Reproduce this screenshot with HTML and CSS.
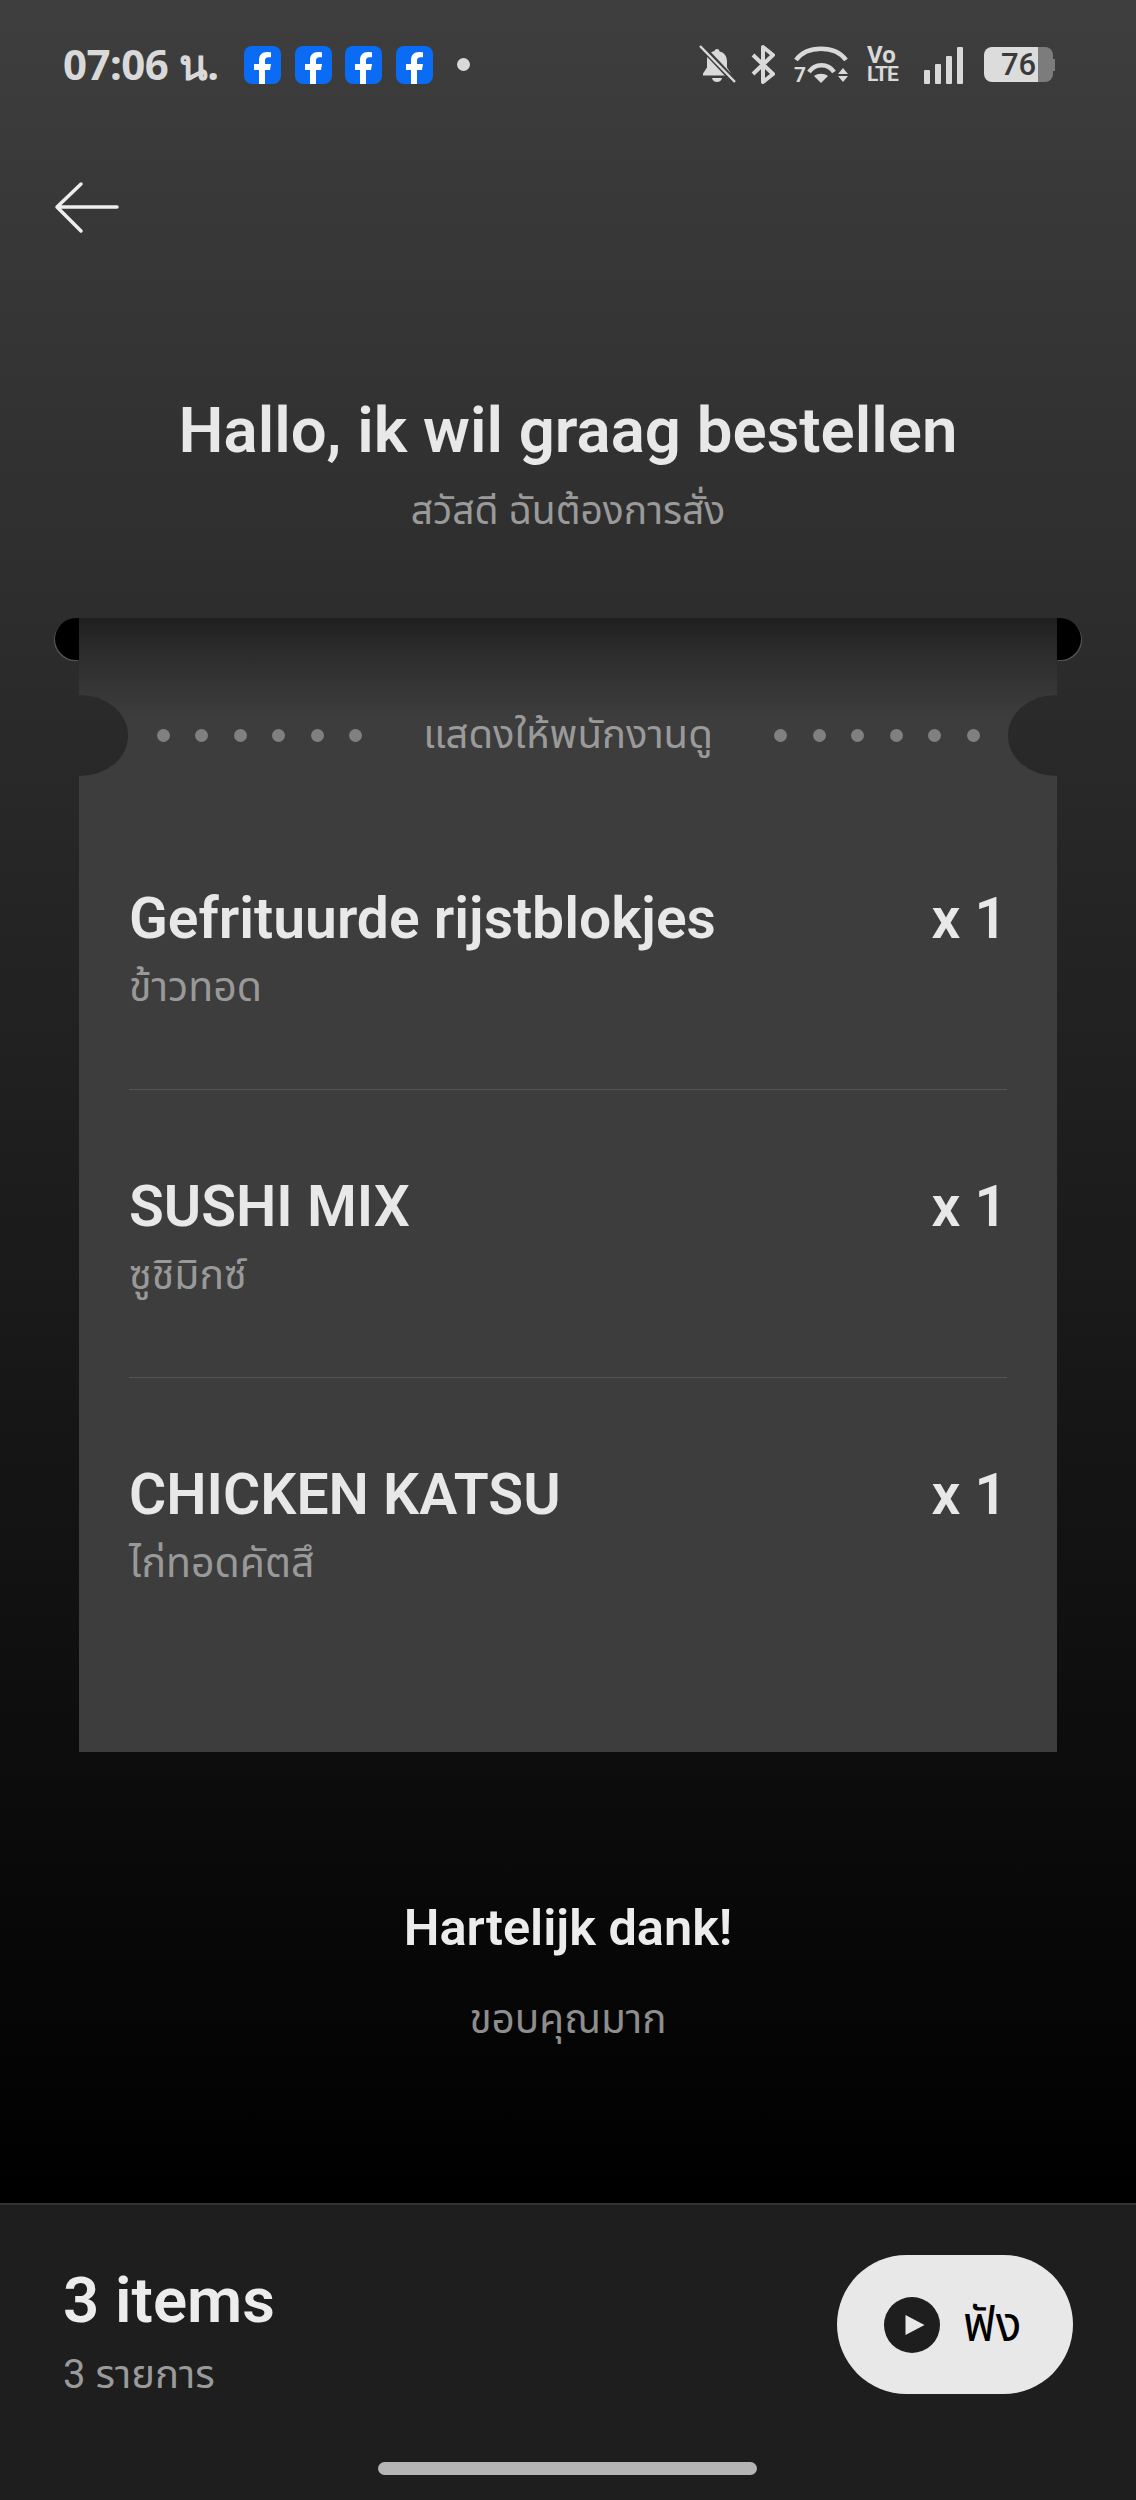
FILE: index.html
```html
<!DOCTYPE html>
<html lang="nl">
<head>
    <meta charset="UTF-8">
    <meta name="viewport" content="width=device-width, initial-scale=1.0">
    <title>Bestellen</title>
    <link rel="stylesheet" href="styles.css">
</head>
<body>
    <div class="screen">
        <div class="status-bar">
            <div class="status-left">
                <span class="clock">07:06 น.</span>
                <svg class="fb" viewBox="0 0 37 38"><rect width="37" height="38" rx="8" fill="#0a6cf5"/><path d="M15 38V24h-5v-6h5v-4c0-5 3-8 8-8 2 0 4 .3 4 .3v5h-2.500c-2.500 0-3.500 1.500-3.500 3.500V18h6l-1 6h-5v14z" fill="#fff"/></svg>
                <svg class="fb" viewBox="0 0 37 38"><rect width="37" height="38" rx="8" fill="#0a6cf5"/><path d="M15 38V24h-5v-6h5v-4c0-5 3-8 8-8 2 0 4 .3 4 .3v5h-2.500c-2.500 0-3.500 1.500-3.500 3.500V18h6l-1 6h-5v14z" fill="#fff"/></svg>
                <svg class="fb" viewBox="0 0 37 38"><rect width="37" height="38" rx="8" fill="#0a6cf5"/><path d="M15 38V24h-5v-6h5v-4c0-5 3-8 8-8 2 0 4 .3 4 .3v5h-2.500c-2.500 0-3.500 1.500-3.500 3.500V18h6l-1 6h-5v14z" fill="#fff"/></svg>
                <svg class="fb" viewBox="0 0 37 38"><rect width="37" height="38" rx="8" fill="#0a6cf5"/><path d="M15 38V24h-5v-6h5v-4c0-5 3-8 8-8 2 0 4 .3 4 .3v5h-2.500c-2.500 0-3.500 1.500-3.500 3.500V18h6l-1 6h-5v14z" fill="#fff"/></svg>
                <span class="status-dot"></span>
            </div>
            <div class="status-right">
                <svg class="ic-bell" width="37" height="39" viewBox="0 0 37 39"><path d="M18 4c1.500 0 2.500 1 2.500 2.500 5 1.200 7.500 5 7.500 10v6l4 6v2H4v-2l4-6v-7c0-5 3-8.500 7.500-9.500C15.500 5 16.500 4 18 4z" fill="#d9d9d9"/><path d="M13 33h10c-.5 2.800-2.500 4-5 4s-4.500-1.200-5-4z" fill="#d9d9d9"/><path d="M1 0l35 37" stroke="#3c3c3c" stroke-width="6"/><path d="M1 1l35 36" stroke="#d9d9d9" stroke-width="2.500"/></svg>
                <svg class="ic-bt" width="25" height="39" viewBox="0 0 25 39"><path d="M2 10l20 19-10 8V2l10 8L2 29" fill="none" stroke="#d9d9d9" stroke-width="4" stroke-linejoin="round"/></svg>
                <div class="wifi">
                    <svg width="55" height="39" viewBox="0 0 55 39"><path d="M2 15C13 0 41 0 52 15" fill="none" stroke="#d9d9d9" stroke-width="4.500"/><path d="M15 27c6-9 19-9 25 0" fill="none" stroke="#d9d9d9" stroke-width="4.500"/><path d="M20 31c4-3 10-3 14 0l-7 7z" fill="#d9d9d9"/><path d="M44 29l5-6 5 6zM44 31h10l-5 6z" fill="#d9d9d9"/></svg>
                    <span class="wifi-seven">7</span>
                </div>
                <div class="volte"><span class="vo">Vo</span><span class="lte">LTE</span></div>
                <div class="signal"><i class="bar-1"></i><i class="bar-2"></i><i class="bar-3"></i><i class="bar-4"></i></div>
                <div class="battery"><div class="battery-fill">76</div><div class="battery-cap"></div></div>
            </div>
        </div>

        <div class="nav">
            <svg width="66" height="54" viewBox="0 0 66 54"><path d="M63 26H4M27 3L3 26l24 24" fill="none" stroke="#eeeeee" stroke-width="3.500" stroke-linecap="round" stroke-linejoin="round"/></svg>
        </div>

        <div class="heading">
            <h1>Hallo, ik wil graag bestellen</h1>
            <p>สวัสดี ฉันต้องการสั่ง</p>
        </div>

        <div class="ticket">
            <span class="roller roller-left"></span>
            <span class="roller roller-right"></span>
            <span class="notch notch-left"></span>
            <span class="notch notch-right"></span>
            <div class="ticket-head">
                <div class="dots"><i></i><i></i><i></i><i></i><i></i><i></i></div>
                <span class="show-staff">แสดงให้พนักงานดู</span>
                <div class="dots"><i></i><i></i><i></i><i></i><i></i><i></i></div>
            </div>
            <div class="order-row">
                <div>
                    <div class="order-name">Gefrituurde rijstblokjes</div>
                    <div class="order-sub">ข้าวทอด</div>
                </div>
                <div class="order-qty">x 1</div>
            </div>
            <div class="order-row">
                <div>
                    <div class="order-name">SUSHI MIX</div>
                    <div class="order-sub">ซูชิมิกซ์</div>
                </div>
                <div class="order-qty">x 1</div>
            </div>
            <div class="order-row">
                <div>
                    <div class="order-name">CHICKEN KATSU</div>
                    <div class="order-sub">ไก่ทอดคัตสึ</div>
                </div>
                <div class="order-qty">x 1</div>
            </div>
        </div>

        <div class="thanks">
            <h2>Hartelijk dank!</h2>
            <p>ขอบคุณมาก</p>
        </div>

        <div class="footer">
            <div class="footer-row">
                <div>
                    <div class="total">3 items</div>
                    <div class="total-sub">3 รายการ</div>
                </div>
                <div class="listen">
                    <svg width="56" height="56" viewBox="0 0 56 56"><circle cx="28" cy="28" r="28" fill="#1e1e1e"/><path d="M21.500 18l19 10-19 10z" fill="#e8e8e8"/></svg>
                    <span>ฟัง</span>
                </div>
            </div>
            <div class="home-bar"></div>
        </div>
    </div>
</body>
</html>
```

FILE: styles.css
```css
*{
    box-sizing: border-box;
}
body{
    margin: 0;
    background: #000;
    font-family: "Roboto", "Noto Sans", "Noto Sans Thai", "DejaVu Sans", sans-serif;
}
h1, h2, p{
    margin: 0;
    font-weight: 600;
}
.screen{
    width: 1136px;
    height: 2500px;
    display: flex;
    flex-direction: column;
    background: linear-gradient(180deg, #3e3e3e 0, #000 2203px);
}

/* status bar */
.status-bar{
    height: 130px;
    padding: 45px 81px 0 63px;
    display: flex;
    justify-content: space-between;
    align-items: flex-start;
    color: #d9d9d9;
}
.status-left{
    display: flex;
    align-items: center;
    height: 39px;
}
.clock{
    font-family: "Noto Sans", sans-serif;
    font-weight: 700;
    font-size: 42px;
    letter-spacing: -.5px;
    margin-right: 25px;
    width: 156px;
    white-space: nowrap;
}
.fb{
    width: 37px;
    height: 38px;
    margin-right: 13.500px;
}
.status-dot{
    width: 13px;
    height: 13px;
    border-radius: 50%;
    background: #d9d9d9;
    margin-left: 11px;
}
.status-right{
    display: flex;
    align-items: center;
    height: 39px;
}
.ic-bell{
    margin-right: 15px;
}
.ic-bt{
    margin-right: 18px;
}
.wifi{
    position: relative;
    width: 55px;
    height: 39px;
    margin-right: 18px;
}
.wifi-seven{
    position: absolute;
    left: 0;
    bottom: 0;
    font-weight: 700;
    font-size: 21px;
    line-height: 17px;
}
.volte{
    width: 33px;
    margin-right: 24px;
    display: flex;
    flex-direction: column;
    font-weight: 700;
}
.vo{
    font-size: 24px;
    line-height: 20px;
}
.lte{
    font-size: 21px;
    line-height: 19px;
    letter-spacing: -1px;
}
.signal{
    display: flex;
    align-items: flex-end;
    gap: 5px;
    height: 38px;
    margin-right: 21px;
}
.signal i{
    width: 6px;
    background: #d9d9d9;
    border-radius: 1px;
}
.bar-1{ height: 14px; }
.bar-2{ height: 20px; }
.bar-3{ height: 28px; }
.bar-4{ height: 37px; }
.battery{
    display: flex;
    align-items: center;
}
.battery-fill{
    width: 69px;
    height: 35px;
    border-radius: 8px;
    background: linear-gradient(90deg, #dcdcdc 0, #dcdcdc 54px, #7c7c7c 54px);
    color: #3a3a3a;
    font-size: 31px;
    line-height: 35px;
    font-weight: 500;
    padding-left: 17px;
}
.battery-cap{
    width: 2px;
    height: 12px;
    background: #7c7c7c;
}

/* back arrow and heading */
.nav{
    height: 110px;
    padding: 51px 0 0 54px;
}
.heading{
    margin-top: 156px;
    height: 222px;
    text-align: center;
}
.heading h1{
    font-size: 63.500px;
    line-height: 70px;
    color: #e8e8e8;
}
.heading p{
    font-size: 39px;
    line-height: 50px;
    margin-top: 20px;
    font-weight: 400;
    color: #9a9a9a;
}

/* ticket */
.ticket{
    position: relative;
    width: 978px;
    height: 1134px;
    margin-left: 79px;
    background: linear-gradient(180deg, #1f1f1f 0, #2b2b2b 30px, #333 60px, #3d3d3d 100px);
}
.roller{
    position: absolute;
    top: 0;
    width: 24px;
    height: 42px;
    background: #000;
}
.roller-left{
    left: -24px;
    border-radius: 21px 0 0 21px;
    box-shadow: -1px 1px 0 #555;
}
.roller-right{
    right: -24px;
    border-radius: 0 21px 21px 0;
    box-shadow: 1px 1px 0 #555;
}
/* same gradient as the page, fixed, so the cut looks see-through */
.notch{
    position: absolute;
    top: 77px;
    width: 49px;
    height: 81px;
    background: linear-gradient(180deg, #3e3e3e 0, #000 2203px) fixed;
}
.notch-left{
    left: 0;
    border-radius: 0 48px 48px 0 / 0 40px 40px 0;
}
.notch-right{
    right: 0;
    border-radius: 48px 0 0 48px / 40px 0 0 40px;
}
.ticket-head{
    height: 184px;
    padding-top: 88px;
    display: flex;
    justify-content: center;
    align-items: flex-start;
}
.dots{
    display: flex;
    gap: 25.500px;
    padding-top: 23px;
}
.dots i{
    width: 13px;
    height: 13px;
    border-radius: 50%;
    background: #808080;
}
.show-staff{
    width: 412px;
    text-align: center;
    font-size: 40px;
    line-height: 58px;
    color: #9a9a9a;
}
.order-row{
    margin: 0 50px;
    height: 288px;
    padding-top: 84px;
    display: flex;
    justify-content: space-between;
    border-bottom: 1px solid #555;
}
.order-row:last-child{
    border-bottom: none;
}
.order-name{
    font-size: 57px;
    line-height: 66px;
    font-weight: 600;
    color: #e8e8e8;
}
.order-sub{
    font-size: 41px;
    line-height: 50px;
    margin-top: 10px;
    color: #999;
}
.order-qty{
    font-size: 57px;
    line-height: 66px;
    font-weight: 600;
    color: #e8e8e8;
}

/* thanks */
.thanks{
    margin-top: 146px;
    flex: 1;
    text-align: center;
}
.thanks h2{
    font-size: 50.500px;
    line-height: 60px;
    color: #ececec;
}
.thanks p{
    font-size: 40.500px;
    line-height: 50px;
    margin-top: 36px;
    font-weight: 400;
    color: #8e8e8e;
}

/* footer */
.footer{
    height: 297px;
    padding: 50px 63px 0 63px;
    background: #1e1e1e;
    border-top: 2px solid #333;
}
.footer-row{
    display: flex;
    justify-content: space-between;
    align-items: flex-start;
}
.total{
    font-size: 63.500px;
    line-height: 74px;
    font-weight: 600;
    color: #ececec;
    padding-top: 9px;
    height: 83px;
}
.total-sub{
    font-size: 40px;
    line-height: 50px;
    margin-top: 12px;
    color: #9a9a9a;
}
.listen{
    width: 236px;
    height: 139px;
    border-radius: 70px;
    background: #e8e8e8;
    display: flex;
    align-items: center;
    padding-left: 47px;
    gap: 23px;
    color: #000;
    font-size: 48px;
}
.listen span{
    padding-top: 3px;
}
.home-bar{
    width: 379px;
    height: 13px;
    margin: 62px 0 0 315px;
    border-radius: 7px;
    background: #b5b5b5;
}
```
